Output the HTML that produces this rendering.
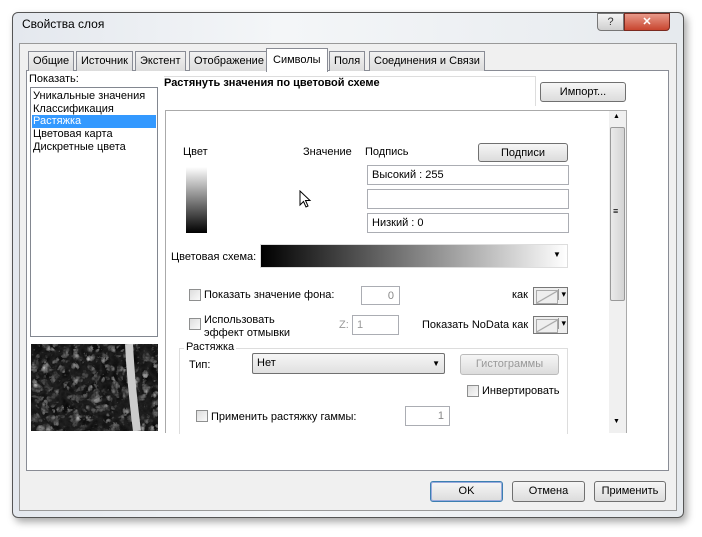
<!DOCTYPE html><html><head><meta charset="utf-8"><style>
*{box-sizing:border-box;margin:0;padding:0}
body{width:702px;height:537px;background:#fff;position:relative;overflow:hidden;font:11px "Liberation Sans",sans-serif;color:#000}
.a{position:absolute}
.btn{position:absolute;border:1px solid #707070;border-radius:3px;background:linear-gradient(#f6f6f6,#dcdcdc);text-align:center;line-height:18px;font-size:11px}
.inp{position:absolute;border:1px solid #abadb3;background:#fff;padding-left:4px;line-height:18px}
.cb{position:absolute;width:12px;height:12px;border:1px solid #8e8f8f;background:linear-gradient(135deg,#ddd,#fafafa)}
.tab{position:absolute;top:51px;height:20px;border:1px solid #898c95;border-bottom:none;background:linear-gradient(#f2f2f2,#dcdcdc);padding:0 4px;line-height:19px}
.sw{position:absolute;width:35px;height:18px;border:1px solid #777;background:#eee}
.sw:before{content:"";position:absolute;left:2px;top:2px;width:20px;height:12px;border:1px solid #aaa;background:linear-gradient(150deg,#eee 45%,#999 50%,#eee 55%)}
.sw:after{content:"▾";position:absolute;right:1px;top:1px;font-size:9px;border-left:1px solid #999;padding-left:2px}
</style></head><body>
<div class="a" style="left:12px;top:12px;width:672px;height:506px;border:1px solid #555;border-radius:6px;background:linear-gradient(90deg,#e4e8ee,#f4f6f8 40%,#e6eaee);box-shadow:3px 4px 8px rgba(0,0,0,.35)"></div>
<div class="a" style="left:22px;top:17px;font-size:12px">Свойства слоя</div>
<div class="a" style="left:597px;top:13px;width:27px;height:18px;border:1px solid #777;border-radius:0 0 0 4px;background:linear-gradient(#f4f4f4,#cfcfcf);text-align:center;font-size:11px;line-height:17px;color:#333">?</div>
<div class="a" style="left:624px;top:13px;width:46px;height:18px;border:1px solid #7a2a20;border-radius:0 0 4px 0;background:linear-gradient(#e89a8a,#c8452f);text-align:center;color:#fff;font-weight:bold;line-height:17px">✕</div>
<div class="a" style="left:19px;top:43px;width:658px;height:468px;border:1px solid #999;background:#f0f0f0"></div>
<div class="a" style="left:26px;top:70px;width:643px;height:401px;border:1px solid #898c95;background:#fff"></div>
<div class="tab" style="left:28px">Общие</div>
<div class="tab" style="left:76px">Источник</div>
<div class="tab" style="left:135px">Экстент</div>
<div class="tab" style="left:189px">Отображение</div>
<div class="tab" style="left:266px;top:48px;height:24px;background:#fff;padding:0 6px;line-height:22px">Символы</div>
<div class="tab" style="left:329px">Поля</div>
<div class="tab" style="left:369px">Соединения и Связи</div>
<div class="a" style="left:29px;top:73px">Показать:</div>
<div class="a" style="left:30px;top:87px;width:128px;height:250px;border:1px solid #828790;background:#fff"></div>
<div class="a" style="left:33px;top:90px;line-height:13px">Уникальные значения<br>Классификация</div>
<div class="a" style="left:32px;top:115px;width:124px;height:13px;background:#3399ff;color:#fff;padding-left:1px;line-height:13px">Растяжка</div>
<div class="a" style="left:33px;top:128px;line-height:13px">Цветовая карта<br>Дискретные цвета</div>
<svg class="a" style="left:31px;top:344px" width="127" height="87"><defs><filter id="n"><feTurbulence baseFrequency="0.1" numOctaves="3" seed="4"/><feColorMatrix type="saturate" values="0"/><feComponentTransfer><feFuncR type="linear" slope="3" intercept="-0.9"/><feFuncG type="linear" slope="3" intercept="-0.9"/><feFuncB type="linear" slope="3" intercept="-0.9"/></feComponentTransfer></filter></defs><rect width="127" height="87" fill="#222"/><rect width="127" height="87" filter="url(#n)"/><path d="M98 0 Q100 40 106 87" stroke="#ccc" stroke-width="8" fill="none"/></svg>
<div class="a" style="left:164px;top:77px;font-weight:bold">Растянуть значения по цветовой схеме</div>
<div class="a" style="left:164px;top:76px;width:372px;height:30px;border-top:1px solid #ddd;border-right:1px solid #ddd"></div>
<div class="btn" style="left:540px;top:82px;width:86px;height:20px">Импорт...</div>
<div class="a" style="left:165px;top:110px;width:462px;height:323px;border:1px solid #aaa;border-bottom:none;background:#fff"></div>
<div class="a" style="left:609px;top:111px;width:17px;height:322px;background:#f0f0f0"></div>
<div class="a" style="left:610px;top:127px;width:15px;height:174px;border:1px solid #999;border-radius:2px;background:linear-gradient(90deg,#eaeaea,#d4d4d4)"></div>
<div class="a" style="left:613px;top:113px;font-size:7px">▲</div><div class="a" style="left:613px;top:418px;font-size:7px">▼</div>
<div class="a" style="left:613px;top:207px;font-size:9px;line-height:9px">≡</div>
<div class="a" style="left:183px;top:146px">Цвет</div>
<div class="a" style="left:186px;top:167px;width:21px;height:66px;background:linear-gradient(#fff,#000)"></div>
<div class="a" style="left:303px;top:146px">Значение</div>
<div class="a" style="left:365px;top:146px">Подпись</div>
<div class="btn" style="left:478px;top:143px;width:90px;height:19px">Подписи</div>
<div class="inp" style="left:367px;top:165px;width:202px;height:20px">Высокий : 255</div>
<div class="inp" style="left:367px;top:189px;width:202px;height:20px"></div>
<div class="inp" style="left:367px;top:213px;width:202px;height:20px">Низкий : 0</div>
<svg class="a" style="left:299px;top:190px" width="14" height="20"><path d="M1 1 L1 15 L4.5 11.5 L7 17 L9 16 L6.5 10.5 L11 10.5 Z" fill="#fff" stroke="#000" stroke-width="1"/></svg>
<div class="a" style="left:171px;top:251px">Цветовая схема:</div>
<div class="a" style="left:260px;top:244px;width:308px;height:24px;border:1px solid #ddd;background:linear-gradient(90deg,#000,#fff);"></div>
<div class="a" style="left:553px;top:250px;font-size:8px">▼</div>
<div class="cb" style="left:189px;top:289px"></div><div class="a" style="left:204px;top:289px">Показать значение фона:</div>
<div class="inp" style="left:361px;top:286px;width:39px;height:19px;text-align:right;padding-right:5px;color:#888">0</div>
<div class="a" style="left:512px;top:289px">как</div>
<div class="sw" style="left:533px;top:287px"></div>
<div class="cb" style="left:189px;top:318px"></div><div class="a" style="left:204px;top:314px;line-height:13px">Использовать<br>эффект отмывки</div>
<div class="a" style="left:339px;top:319px;color:#999">Z:</div>
<div class="inp" style="left:352px;top:315px;width:47px;height:20px;color:#999">1</div>
<div class="a" style="left:422px;top:319px">Показать NoData как</div>
<div class="sw" style="left:533px;top:316px"></div>
<div class="a" style="left:179px;top:348px;width:389px;height:86px;border:1px solid #ddd;border-bottom:none"></div>
<div class="a" style="left:184px;top:341px;background:#fff;padding:0 2px">Растяжка</div>
<div class="a" style="left:189px;top:359px">Тип:</div>
<div class="a" style="left:252px;top:353px;width:193px;height:21px;border:1px solid #707070;border-radius:2px;background:linear-gradient(#f6f6f6,#e0e0e0);padding-left:4px;line-height:19px">Нет<span style="position:absolute;right:4px;font-size:8px">▼</span></div>
<div class="btn" style="left:460px;top:354px;width:99px;height:21px;border-color:#bbb;color:#999">Гистограммы</div>
<div class="cb" style="left:467px;top:385px"></div><div class="a" style="left:482px;top:385px">Инвертировать</div>
<div class="cb" style="left:196px;top:410px"></div><div class="a" style="left:211px;top:411px">Применить растяжку гаммы:</div>
<div class="inp" style="left:405px;top:406px;width:45px;height:20px;text-align:right;padding-right:5px;color:#888">1</div>
<div class="btn" style="left:430px;top:481px;width:73px;height:21px;border-color:#3c7fb1;box-shadow:inset 0 0 0 1px #9ad">OK</div>
<div class="btn" style="left:512px;top:481px;width:73px;height:21px">Отмена</div>
<div class="btn" style="left:594px;top:481px;width:72px;height:21px">Применить</div>
</body></html>
